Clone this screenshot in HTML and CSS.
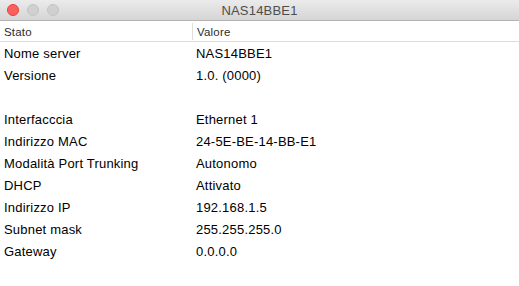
FILE: index.html
```html
<!DOCTYPE html>
<html lang="it">
  <head>
    <meta charset="UTF-8" />
    <title>NAS14BBE1</title>
    <link rel="stylesheet" href="styles.css">
  </head>
  <body>
    <div class="window">
      <div class="titlebar">
        <div class="lights">
          <span class="light close"></span>
          <span class="light"></span>
          <span class="light"></span>
        </div>
        <div class="title">NAS14BBE1</div>
      </div>

      <div class="head">
        <div class="col key">Stato</div>
        <div class="col val">Valore</div>
      </div>

      <div class="rows">
        <div class="row"><div class="key">Nome server</div><div class="val">NAS14BBE1</div></div>
        <div class="row"><div class="key">Versione</div><div class="val">1.0. (0000)</div></div>
        <div class="row"><div class="key"></div><div class="val"></div></div>
        <div class="row"><div class="key">Interfacccia</div><div class="val">Ethernet 1</div></div>
        <div class="row"><div class="key">Indirizzo MAC</div><div class="val">24-5E-BE-14-BB-E1</div></div>
        <div class="row"><div class="key">Modalità Port Trunking</div><div class="val">Autonomo</div></div>
        <div class="row"><div class="key">DHCP</div><div class="val">Attivato</div></div>
        <div class="row"><div class="key">Indirizzo IP</div><div class="val">192.168.1.5</div></div>
        <div class="row"><div class="key">Subnet mask</div><div class="val">255.255.255.0</div></div>
        <div class="row"><div class="key">Gateway</div><div class="val">0.0.0.0</div></div>
      </div>
    </div>
  </body>
</html>
```

FILE: styles.css
```css
body {
  margin: 0;
  font-family: "Helvetica Neue", "Liberation Sans", Arial, sans-serif;
  background: #ffffff;
  color: #000;
}

.window {
  width: 519px;
  height: 286px;
  overflow: hidden;
}

.titlebar {
  height: 20px;
  background: linear-gradient(#ebebeb, #d5d5d5);
  border-bottom: 1px solid #b4b4b4;
  display: flex;
  align-items: center;
  position: relative;
}

.lights {
  display: flex;
  gap: 8px;
  padding-left: 7px;
}

.light {
  width: 12px;
  height: 12px;
  border-radius: 50%;
  background: #d0d0d0;
  box-sizing: border-box;
  border: 1px solid #c4c4c4;
}

.light.close {
  background: #fc605c;
  border-color: #e0443e;
}

.title {
  position: absolute;
  left: 0;
  right: 0;
  text-align: center;
  font-size: 13px;
  letter-spacing: 0.2px;
  color: #4d4d4d;
  pointer-events: none;
}

.head {
  display: flex;
  height: 20px;
  align-items: center;
  border-bottom: 1px solid #dcdcdc;
  font-size: 11.5px;
  letter-spacing: 0.2px;
  color: #2c2c2c;
}

.head .col {
  padding-top: 2px;
}

.head .key {
  width: 192px;
  padding-left: 4px;
  box-sizing: border-box;
}

.head .val {
  border-left: 1px solid #dedede;
  padding-left: 4px;
  line-height: 15px;
}

.row {
  display: flex;
  height: 22px;
  align-items: center;
  font-size: 13px;
  letter-spacing: 0.2px;
}

.row .key {
  width: 196px;
  padding-left: 4px;
  box-sizing: border-box;
}
```
